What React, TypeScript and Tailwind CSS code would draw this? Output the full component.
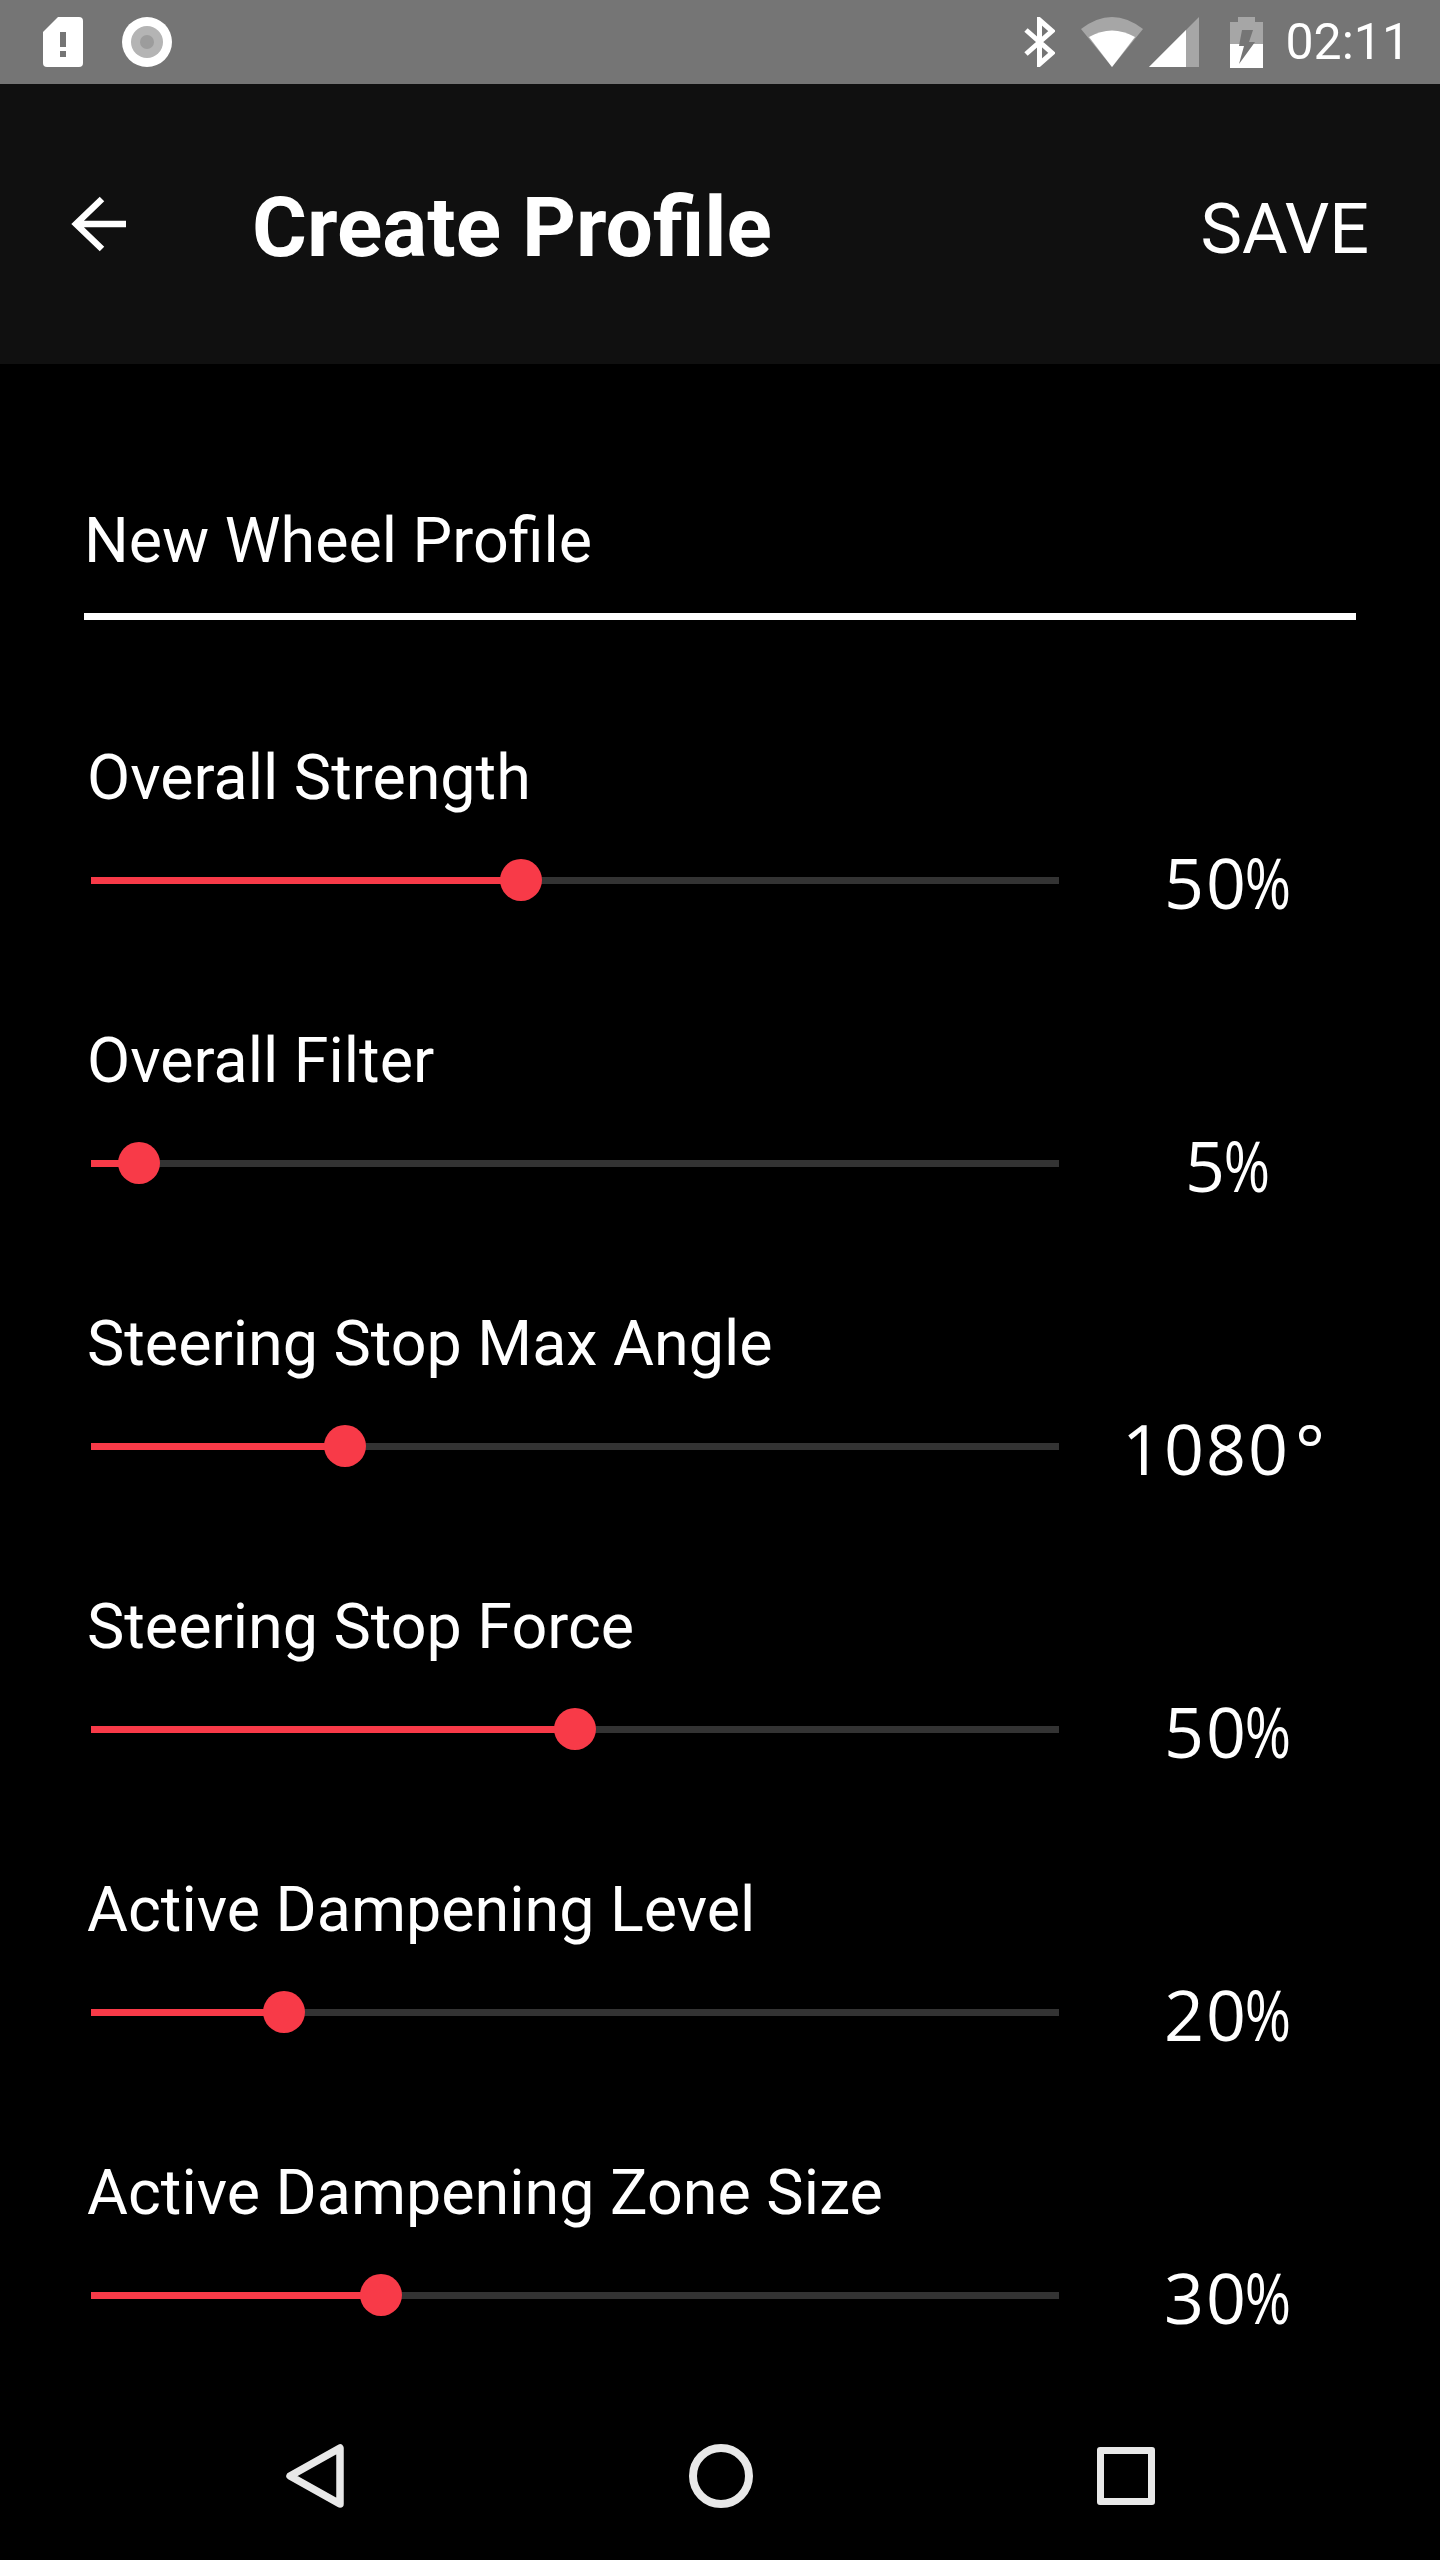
const roboto = "font-['Roboto',sans-serif]";

const sliders = [
  { label: 'Overall Strength', value: '50%', thumb: 521 },
  { label: 'Overall Filter', value: '5%', thumb: 139 },
  { label: 'Steering Stop Max Angle', value: '1080°', thumb: 345 },
  { label: 'Steering Stop Force', value: '50%', thumb: 575 },
  { label: 'Active Dampening Level', value: '20%', thumb: 284 },
  { label: 'Active Dampening Zone Size', value: '30%', thumb: 381 },
];

function StatusBar() {
  return (
    <div className="flex h-[84px] shrink-0 items-center bg-[#757575] pl-[43px] pr-[30px]">
      <svg width="40" height="50" viewBox="0 0 40 50" className="block">
        <path d="M15 0H36Q40 0 40 4V46Q40 50 36 50H4Q0 50 0 46V15Z" fill="#fff" />
        <rect x="17" y="15" width="6" height="15" fill="#757575" />
        <rect x="17" y="34" width="6" height="6" fill="#757575" />
      </svg>
      <svg width="50" height="50" viewBox="0 0 50 50" className="ml-[39px] block">
        <circle cx="25" cy="25" r="25" fill="#fff" />
        <circle cx="25" cy="25" r="16" fill="#b4b4b4" />
        <circle cx="25" cy="25" r="7" fill="#9c9c9c" />
      </svg>
      <div className="flex-1" />
      <svg width="31" height="50" viewBox="0 0 31 50" className="block">
        <path d="M2 13L28 36L15.5 47V3L28 14L2 37" fill="none" stroke="#fff" strokeWidth="5" />
      </svg>
      <svg width="62" height="50" viewBox="0 0 62 50" className="ml-[26px] block">
        <path d="M0 12Q31 -12 62 12L31 50Z" fill="#a6a6a6" />
        <path d="M8 20Q31 7 54 20L31 50Z" fill="#fff" />
      </svg>
      <svg width="50" height="50" viewBox="0 0 50 50" className="ml-[6px] block">
        <path d="M50 0V50H0Z" fill="#a6a6a6" />
        <path d="M37 13V50H0Z" fill="#fff" />
      </svg>
      <svg width="33" height="51" viewBox="0 0 33 51" className="ml-[31px] block">
        <path d="M8 0H25V5H33V51H0V5H8Z" fill="#a6a6a6" />
        <path d="M0 27H33V51H0Z" fill="#fff" />
        <path d="M12 13H23L19 25H25L9 47L14 29H9Z" fill="#757575" />
      </svg>
      <span className={`${roboto} ml-[22px] text-[50px] leading-none text-white`}>02:11</span>
    </div>
  );
}

// the values sit on a fixed 42px pitch, like a monospaced face
function SliderValue({ value }: { value: string }) {
  return (
    <div className="mt-[4px] flex w-[334px] justify-center font-['Open_Sans',sans-serif] text-[70px] leading-none text-white">
      {value.split('').map((ch, i) => (
        <span key={i} className="flex w-[42px] justify-center">
          {ch === '%' ? <span className="inline-block scale-x-[0.8]">%</span> : ch}
        </span>
      ))}
    </div>
  );
}

function SliderRow({ label, value, thumb }: { label: string; value: string; thumb: number }) {
  return (
    <div className="flex h-[283px] flex-col">
      <div className={`${roboto} h-[71px] pl-[87px] text-[62.8px] leading-[71px] text-white`}>{label}</div>
      <div className="flex h-[134px] items-center">
        <div className="relative ml-[91px] h-[7px] w-[968px] bg-[#333333]">
          <div className="h-full bg-[#f83a48]" style={{ width: thumb - 91 }} />
          <div
            className="absolute top-[-18px] h-[42px] w-[42px] rounded-full bg-[#f83a48]"
            style={{ left: thumb - 91 - 21 }}
          />
        </div>
        <SliderValue value={value} />
      </div>
    </div>
  );
}

function NavBar() {
  return (
    <div className="flex h-[168px] shrink-0 items-start pt-[52px]">
      <svg width="64" height="64" viewBox="0 0 64 64" className="ml-[284px] block">
        <path d="M56 4V60L6 32Z" fill="none" stroke="#e8e8e8" strokeWidth="7.5" strokeLinejoin="round" />
      </svg>
      <div className="ml-[341px] h-[64px] w-[64px] rounded-full border-[8px] border-[#e8e8e8]" />
      <div className="ml-[344px] mt-[3px] h-[58px] w-[58px] rounded-[3px] border-[7px] border-[#e8e8e8]" />
    </div>
  );
}

export default function App() {
  return (
    <div className="flex h-[2560px] w-[1440px] flex-col overflow-hidden bg-black">
      <StatusBar />
      <div className="flex h-[280px] shrink-0 items-center bg-[#101010]">
        <svg width="60" height="60" viewBox="0 0 60 60" className="ml-[68px] block">
          <path d="M58 30H8M34 5L8 30L34 55" fill="none" stroke="#fff" strokeWidth="6.5" />
        </svg>
        <h1 className={`${roboto} ml-[124px] mt-[8px] text-[84px] font-bold leading-none text-white`}>Create Profile</h1>
        <span className={`${roboto} ml-auto mr-[71px] mt-[9px] text-[70px] leading-none text-white`}>SAVE</span>
      </div>
      <div className="min-h-0 flex-1 overflow-hidden">
        <div className="mx-[84px] mt-[136px] h-[120px] w-[1272px] border-b-[7px] border-white pt-[5px]">
          <div className={`${roboto} text-[62.8px] leading-[71px] text-white`}>New Wheel Profile</div>
        </div>
        <div className="mt-[122px]">
          {sliders.map((s) => (
            <SliderRow key={s.label} {...s} />
          ))}
        </div>
      </div>
      <NavBar />
    </div>
  );
}
